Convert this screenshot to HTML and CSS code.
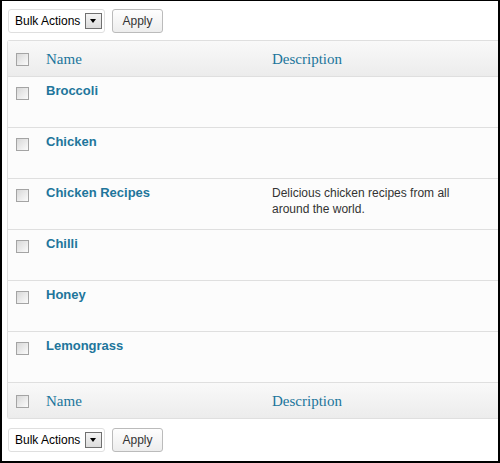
FILE: index.html
```html
<!DOCTYPE html>
<html lang="en">
<head>
  <meta charset="UTF-8">
  <title>Tags</title>
  <link rel="stylesheet" href="styles.css">
</head>
<body>
  <div class="frame">

    <!-- top bulk actions -->
    <div class="tablenav">
      <div class="select">
        <span class="select-label">Bulk Actions</span>
        <span class="select-arrow"></span>
      </div>
      <button class="button">Apply</button>
    </div>

    <div class="list-table">
      <div class="row head">
        <div class="cell check-col"><span class="check"></span></div>
        <div class="cell"><a href="#" class="col-title">Name</a></div>
        <div class="cell"><a href="#" class="col-title">Description</a></div>
      </div>

      <div class="row">
        <div class="cell check-col"><span class="check"></span></div>
        <div class="cell"><a href="#" class="row-title">Broccoli</a></div>
        <div class="cell desc"></div>
      </div>
      <div class="row">
        <div class="cell check-col"><span class="check"></span></div>
        <div class="cell"><a href="#" class="row-title">Chicken</a></div>
        <div class="cell desc"></div>
      </div>
      <div class="row">
        <div class="cell check-col"><span class="check"></span></div>
        <div class="cell"><a href="#" class="row-title">Chicken Recipes</a></div>
        <div class="cell desc">Delicious chicken recipes from all around the world.</div>
      </div>
      <div class="row">
        <div class="cell check-col"><span class="check"></span></div>
        <div class="cell"><a href="#" class="row-title">Chilli</a></div>
        <div class="cell desc"></div>
      </div>
      <div class="row">
        <div class="cell check-col"><span class="check"></span></div>
        <div class="cell"><a href="#" class="row-title">Honey</a></div>
        <div class="cell desc"></div>
      </div>
      <div class="row">
        <div class="cell check-col"><span class="check"></span></div>
        <div class="cell"><a href="#" class="row-title">Lemongrass</a></div>
        <div class="cell desc"></div>
      </div>

      <div class="row head foot">
        <div class="cell check-col"><span class="check"></span></div>
        <div class="cell"><a href="#" class="col-title">Name</a></div>
        <div class="cell"><a href="#" class="col-title">Description</a></div>
      </div>
    </div>

    <!-- bottom bulk actions -->
    <div class="tablenav bottom">
      <div class="select">
        <span class="select-label">Bulk Actions</span>
        <span class="select-arrow"></span>
      </div>
      <button class="button">Apply</button>
    </div>

  </div>
</body>
</html>
```

FILE: styles.css
```css
body {
  margin: 0;
  background-color: #fff;
  font-family: "Liberation Sans", Arial, sans-serif;
}

.frame {
  box-sizing: border-box;
  width: 500px;
  height: 463px;
  border-style: solid;
  border-color: #000;
  border-width: 1px 2px 2px 2px;
  padding: 8px 0 0 5px;
  overflow: hidden;
}

/* bulk actions bar */
.tablenav {
  display: flex;
  align-items: center;
  gap: 7px;
  height: 24px;
  margin-left: 1px;
}

.tablenav.bottom {
  margin-top: 9px;
}

.select {
  box-sizing: border-box;
  display: flex;
  align-items: center;
  justify-content: space-between;
  width: 97px;
  height: 24px;
  padding: 0 2px 0 6px;
  border: 1px solid #dfdfdf;
  border-radius: 3px;
  background-color: #fff;
}

.select-label {
  font-size: 12px;
  color: #000;
}

.select-arrow {
  box-sizing: border-box;
  position: relative;
  width: 17px;
  height: 16px;
  border: 1px solid #707070;
  background: linear-gradient(#f4f4f4, #dcdcdc);
}

.select-arrow::after {
  content: "";
  position: absolute;
  left: 4px;
  top: 5px;
  border-left: 3.5px solid transparent;
  border-right: 3.5px solid transparent;
  border-top: 4px solid #000;
}

.button {
  box-sizing: border-box;
  width: 51px;
  height: 24px;
  padding: 0;
  border: 1px solid #bbb;
  border-radius: 3px;
  background: linear-gradient(#fefefe, #ededed);
  font-family: "Liberation Sans", Arial, sans-serif;
  font-size: 12px;
  color: #333;
}

/* table */
.list-table {
  margin-top: 7px;
  border: 1px solid #dfdfdf;
  border-right: none;
  border-radius: 3px 0 0 3px;
  background-color: #fcfcfc;
}

.row {
  display: grid;
  grid-template-columns: 30px 226px 1fr;
  height: 50px;
  border-bottom: 1px solid #dfdfdf;
}

.row.head {
  height: 35px;
  background: linear-gradient(#f9f9f9, #ececec);
  align-items: center;
}

.row.foot {
  border-bottom: none;
}

.cell {
  padding: 6px 8px 0 8px;
}

.row.head .cell {
  padding-top: 0;
}

.check {
  box-sizing: border-box;
  display: block;
  width: 13px;
  height: 13px;
  margin-top: 4px;
  border: 1px solid #a4a4a4;
  background: linear-gradient(135deg, #d8d8d8, #fbfbfb);
}

.row.head .check {
  margin-top: 1px;
}

.col-title {
  font-family: "Liberation Serif", "Times New Roman", serif;
  font-size: 15px;
  color: #21759b;
  text-decoration: none;
}

.row-title {
  display: block;
  font-size: 13px;
  font-weight: bold;
  line-height: 15px;
  color: #21759b;
  text-decoration: none;
}

.desc {
  font-size: 12px;
  line-height: 15.6px;
  color: #333;
  padding-top: 7px;
}
```
